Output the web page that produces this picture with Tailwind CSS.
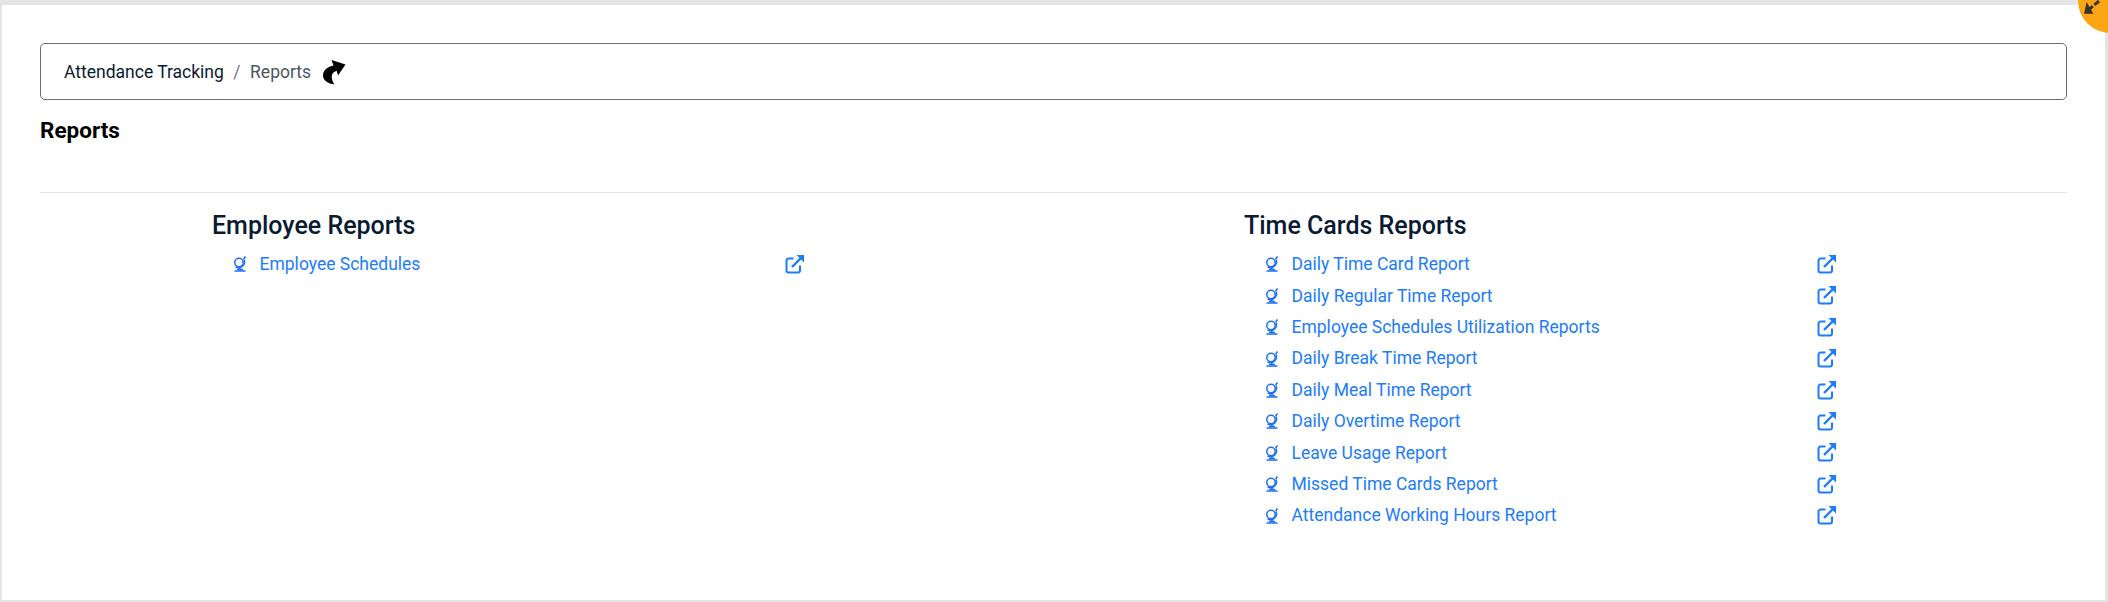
<!DOCTYPE html>
<html>
<head>
<meta charset="utf-8">
<script src="https://cdn.jsdelivr.net/npm/@tailwindcss/browser@4"></script>
</head>
<body class="m-0 bg-[#e5e5e5] overflow-hidden font-['Roboto',sans-serif]">
<div class="relative w-[2108px] h-[602px] pt-[5px] pl-[2px] pr-[3px] pb-[2px]">
  <div class="bg-white h-[595px] px-[38px] pt-[38px]">
    <nav class="h-[57px] border border-[#6c6c6c] rounded-[5px] flex items-center pl-[23px] pt-[1px] text-[17.5px]">
      <span class="text-[#0b1a33]">Attendance Tracking</span>
      <span class="text-[#6c757d] px-[9.5px]">/</span>
      <span class="text-[#4b5563]">Reports</span>
      <svg class="ml-[11px]" width="24" height="26" viewBox="0 0 24 26"><path d="M9.5 1 L23.5 5.5 L16 16.5 L14.8 12 C11.5 12.5 9.5 15 9.8 18.5 C10 21 11 23.5 12.5 25.5 C6 24.5 1 21.5 1 16.5 C1 11 6 7.5 11.5 6.5 Z" fill="#000"/></svg>
    </nav>
    <h1 class="mt-[17px] text-[22.5px] leading-[26px] font-bold text-black">Reports</h1>
    <div class="mt-[49px] border-t border-[#e5e5e5]"></div>
    <div class="flex mt-[16px]">
      <section class="w-[1032px] pl-[172px]">
        <h2 class="text-[25px] leading-[34px] font-medium text-[#0b1a33]">Employee Reports</h2>
        <ul class="mt-[5.5px] w-[592px]">
          <li class="h-[31.4px] flex items-center pl-[21px] text-[17.5px] text-[#1c7cfb] pt-[0.5px]">
            <svg width="14" height="16" viewBox="0 0 14 16" fill="none" stroke="#1c6ef5" stroke-width="1.5"><circle cx="6" cy="6.5" r="4.2"/><path d="M12.5 0.5 L10.5 3 M11 3.5 C13 8 9 13 2.5 11.3 M7 11.5 V14 M1.5 15 H12.5"/><path d="M4 13.5 H10" stroke-width="1.5"/></svg>
            <a class="ml-[12.5px] flex-1">Employee Schedules</a>
            <svg width="19" height="19" viewBox="0 0 19 19" fill="none" stroke="#1c7cfb" stroke-width="2"><path d="M8.5 3.5 H3.5 A2 2 0 0 0 1.5 5.5 V15.5 A2 2 0 0 0 3.5 17.5 H13 A2 2 0 0 0 15 15.5 V10.5"/><path d="M7 12 L16 3" stroke-width="2.4"/><path d="M11.5 0 H19 V7.5 Z" fill="#1c7cfb" stroke="none"/></svg>
          </li>
        </ul>
      </section>
      <section class="flex-1 pl-[172px]">
        <h2 class="text-[25px] leading-[34px] font-medium text-[#0b1a33]">Time Cards Reports</h2>
        <ul class="mt-[5.5px] w-[592px]">
          <li class="h-[31.4px] flex items-center pl-[21px] text-[17.5px] text-[#1c7cfb] pt-[0.5px]">
            <svg width="14" height="16" viewBox="0 0 14 16" fill="none" stroke="#1c6ef5" stroke-width="1.5"><circle cx="6" cy="6.5" r="4.2"/><path d="M12.5 0.5 L10.5 3 M11 3.5 C13 8 9 13 2.5 11.3 M7 11.5 V14 M1.5 15 H12.5"/><path d="M4 13.5 H10" stroke-width="1.5"/></svg>
            <a class="ml-[12.5px] flex-1">Daily Time Card Report</a>
            <svg width="19" height="19" viewBox="0 0 19 19" fill="none" stroke="#1c7cfb" stroke-width="2"><path d="M8.5 3.5 H3.5 A2 2 0 0 0 1.5 5.5 V15.5 A2 2 0 0 0 3.5 17.5 H13 A2 2 0 0 0 15 15.5 V10.5"/><path d="M7 12 L16 3" stroke-width="2.4"/><path d="M11.5 0 H19 V7.5 Z" fill="#1c7cfb" stroke="none"/></svg>
          </li>
          <li class="h-[31.4px] flex items-center pl-[21px] text-[17.5px] text-[#1c7cfb] pt-[0.5px]">
            <svg width="14" height="16" viewBox="0 0 14 16" fill="none" stroke="#1c6ef5" stroke-width="1.5"><circle cx="6" cy="6.5" r="4.2"/><path d="M12.5 0.5 L10.5 3 M11 3.5 C13 8 9 13 2.5 11.3 M7 11.5 V14 M1.5 15 H12.5"/><path d="M4 13.5 H10" stroke-width="1.5"/></svg>
            <a class="ml-[12.5px] flex-1">Daily Regular Time Report</a>
            <svg width="19" height="19" viewBox="0 0 19 19" fill="none" stroke="#1c7cfb" stroke-width="2"><path d="M8.5 3.5 H3.5 A2 2 0 0 0 1.5 5.5 V15.5 A2 2 0 0 0 3.5 17.5 H13 A2 2 0 0 0 15 15.5 V10.5"/><path d="M7 12 L16 3" stroke-width="2.4"/><path d="M11.5 0 H19 V7.5 Z" fill="#1c7cfb" stroke="none"/></svg>
          </li>
          <li class="h-[31.4px] flex items-center pl-[21px] text-[17.5px] text-[#1c7cfb] pt-[0.5px]">
            <svg width="14" height="16" viewBox="0 0 14 16" fill="none" stroke="#1c6ef5" stroke-width="1.5"><circle cx="6" cy="6.5" r="4.2"/><path d="M12.5 0.5 L10.5 3 M11 3.5 C13 8 9 13 2.5 11.3 M7 11.5 V14 M1.5 15 H12.5"/><path d="M4 13.5 H10" stroke-width="1.5"/></svg>
            <a class="ml-[12.5px] flex-1">Employee Schedules Utilization Reports</a>
            <svg width="19" height="19" viewBox="0 0 19 19" fill="none" stroke="#1c7cfb" stroke-width="2"><path d="M8.5 3.5 H3.5 A2 2 0 0 0 1.5 5.5 V15.5 A2 2 0 0 0 3.5 17.5 H13 A2 2 0 0 0 15 15.5 V10.5"/><path d="M7 12 L16 3" stroke-width="2.4"/><path d="M11.5 0 H19 V7.5 Z" fill="#1c7cfb" stroke="none"/></svg>
          </li>
          <li class="h-[31.4px] flex items-center pl-[21px] text-[17.5px] text-[#1c7cfb] pt-[0.5px]">
            <svg width="14" height="16" viewBox="0 0 14 16" fill="none" stroke="#1c6ef5" stroke-width="1.5"><circle cx="6" cy="6.5" r="4.2"/><path d="M12.5 0.5 L10.5 3 M11 3.5 C13 8 9 13 2.5 11.3 M7 11.5 V14 M1.5 15 H12.5"/><path d="M4 13.5 H10" stroke-width="1.5"/></svg>
            <a class="ml-[12.5px] flex-1">Daily Break Time Report</a>
            <svg width="19" height="19" viewBox="0 0 19 19" fill="none" stroke="#1c7cfb" stroke-width="2"><path d="M8.5 3.5 H3.5 A2 2 0 0 0 1.5 5.5 V15.5 A2 2 0 0 0 3.5 17.5 H13 A2 2 0 0 0 15 15.5 V10.5"/><path d="M7 12 L16 3" stroke-width="2.4"/><path d="M11.5 0 H19 V7.5 Z" fill="#1c7cfb" stroke="none"/></svg>
          </li>
          <li class="h-[31.4px] flex items-center pl-[21px] text-[17.5px] text-[#1c7cfb] pt-[0.5px]">
            <svg width="14" height="16" viewBox="0 0 14 16" fill="none" stroke="#1c6ef5" stroke-width="1.5"><circle cx="6" cy="6.5" r="4.2"/><path d="M12.5 0.5 L10.5 3 M11 3.5 C13 8 9 13 2.5 11.3 M7 11.5 V14 M1.5 15 H12.5"/><path d="M4 13.5 H10" stroke-width="1.5"/></svg>
            <a class="ml-[12.5px] flex-1">Daily Meal Time Report</a>
            <svg width="19" height="19" viewBox="0 0 19 19" fill="none" stroke="#1c7cfb" stroke-width="2"><path d="M8.5 3.5 H3.5 A2 2 0 0 0 1.5 5.5 V15.5 A2 2 0 0 0 3.5 17.5 H13 A2 2 0 0 0 15 15.5 V10.5"/><path d="M7 12 L16 3" stroke-width="2.4"/><path d="M11.5 0 H19 V7.5 Z" fill="#1c7cfb" stroke="none"/></svg>
          </li>
          <li class="h-[31.4px] flex items-center pl-[21px] text-[17.5px] text-[#1c7cfb] pt-[0.5px]">
            <svg width="14" height="16" viewBox="0 0 14 16" fill="none" stroke="#1c6ef5" stroke-width="1.5"><circle cx="6" cy="6.5" r="4.2"/><path d="M12.5 0.5 L10.5 3 M11 3.5 C13 8 9 13 2.5 11.3 M7 11.5 V14 M1.5 15 H12.5"/><path d="M4 13.5 H10" stroke-width="1.5"/></svg>
            <a class="ml-[12.5px] flex-1">Daily Overtime Report</a>
            <svg width="19" height="19" viewBox="0 0 19 19" fill="none" stroke="#1c7cfb" stroke-width="2"><path d="M8.5 3.5 H3.5 A2 2 0 0 0 1.5 5.5 V15.5 A2 2 0 0 0 3.5 17.5 H13 A2 2 0 0 0 15 15.5 V10.5"/><path d="M7 12 L16 3" stroke-width="2.4"/><path d="M11.5 0 H19 V7.5 Z" fill="#1c7cfb" stroke="none"/></svg>
          </li>
          <li class="h-[31.4px] flex items-center pl-[21px] text-[17.5px] text-[#1c7cfb] pt-[0.5px]">
            <svg width="14" height="16" viewBox="0 0 14 16" fill="none" stroke="#1c6ef5" stroke-width="1.5"><circle cx="6" cy="6.5" r="4.2"/><path d="M12.5 0.5 L10.5 3 M11 3.5 C13 8 9 13 2.5 11.3 M7 11.5 V14 M1.5 15 H12.5"/><path d="M4 13.5 H10" stroke-width="1.5"/></svg>
            <a class="ml-[12.5px] flex-1">Leave Usage Report</a>
            <svg width="19" height="19" viewBox="0 0 19 19" fill="none" stroke="#1c7cfb" stroke-width="2"><path d="M8.5 3.5 H3.5 A2 2 0 0 0 1.5 5.5 V15.5 A2 2 0 0 0 3.5 17.5 H13 A2 2 0 0 0 15 15.5 V10.5"/><path d="M7 12 L16 3" stroke-width="2.4"/><path d="M11.5 0 H19 V7.5 Z" fill="#1c7cfb" stroke="none"/></svg>
          </li>
          <li class="h-[31.4px] flex items-center pl-[21px] text-[17.5px] text-[#1c7cfb] pt-[0.5px]">
            <svg width="14" height="16" viewBox="0 0 14 16" fill="none" stroke="#1c6ef5" stroke-width="1.5"><circle cx="6" cy="6.5" r="4.2"/><path d="M12.5 0.5 L10.5 3 M11 3.5 C13 8 9 13 2.5 11.3 M7 11.5 V14 M1.5 15 H12.5"/><path d="M4 13.5 H10" stroke-width="1.5"/></svg>
            <a class="ml-[12.5px] flex-1">Missed Time Cards Report</a>
            <svg width="19" height="19" viewBox="0 0 19 19" fill="none" stroke="#1c7cfb" stroke-width="2"><path d="M8.5 3.5 H3.5 A2 2 0 0 0 1.5 5.5 V15.5 A2 2 0 0 0 3.5 17.5 H13 A2 2 0 0 0 15 15.5 V10.5"/><path d="M7 12 L16 3" stroke-width="2.4"/><path d="M11.5 0 H19 V7.5 Z" fill="#1c7cfb" stroke="none"/></svg>
          </li>
          <li class="h-[31.4px] flex items-center pl-[21px] text-[17.5px] text-[#1c7cfb] pt-[0.5px]">
            <svg width="14" height="16" viewBox="0 0 14 16" fill="none" stroke="#1c6ef5" stroke-width="1.5"><circle cx="6" cy="6.5" r="4.2"/><path d="M12.5 0.5 L10.5 3 M11 3.5 C13 8 9 13 2.5 11.3 M7 11.5 V14 M1.5 15 H12.5"/><path d="M4 13.5 H10" stroke-width="1.5"/></svg>
            <a class="ml-[12.5px] flex-1">Attendance Working Hours Report</a>
            <svg width="19" height="19" viewBox="0 0 19 19" fill="none" stroke="#1c7cfb" stroke-width="2"><path d="M8.5 3.5 H3.5 A2 2 0 0 0 1.5 5.5 V15.5 A2 2 0 0 0 3.5 17.5 H13 A2 2 0 0 0 15 15.5 V10.5"/><path d="M7 12 L16 3" stroke-width="2.4"/><path d="M11.5 0 H19 V7.5 Z" fill="#1c7cfb" stroke="none"/></svg>
          </li>
        </ul>
      </section>
    </div>
  </div>
  <div class="absolute left-[2078px] top-[-32px] w-[65px] h-[65px] rounded-full bg-[#fda513]">
    <svg class="absolute left-[0px] top-[32px]" width="30" height="20" viewBox="0 0 30 20" fill="none"><path d="M21 1 L8 12" stroke="#333" stroke-width="3" stroke-dasharray="6 2"/><path d="M9 4 L7 13 H14 Z" fill="#333" stroke="#333" stroke-width="1.5"/></svg>
  </div>
</div>
</body>
</html>
